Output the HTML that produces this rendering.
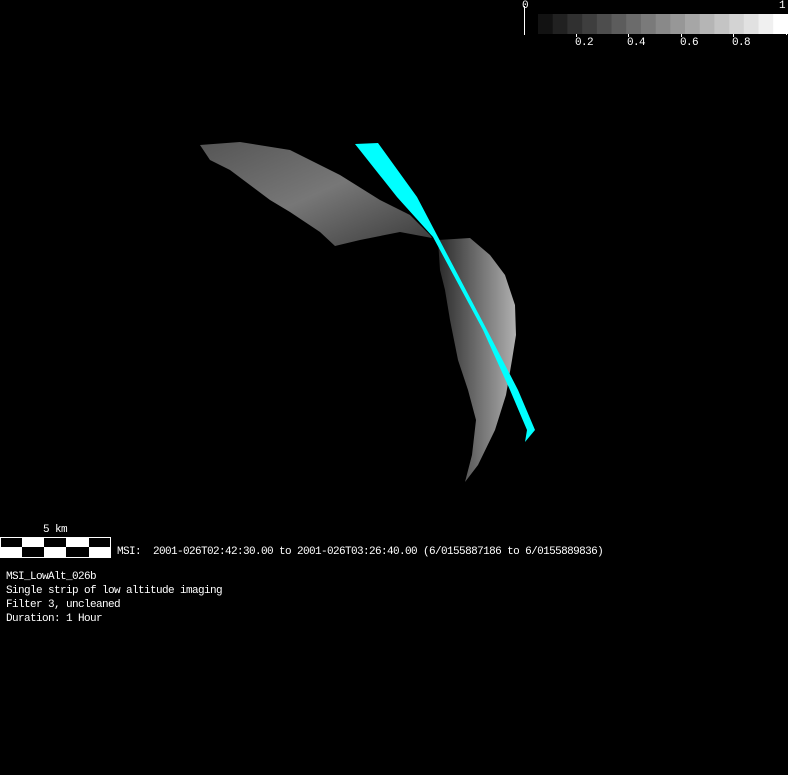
<!DOCTYPE html>
<html><head><style>
body{margin:0;background:#000;width:788px;height:775px;overflow:hidden;position:relative;font-family:"Liberation Mono",monospace;color:#fff;font-size:11px;letter-spacing:-0.6px}
.t{position:absolute;white-space:pre;line-height:12px}
</style></head><body>
<svg width="788" height="775" style="position:absolute;left:0;top:0">
<defs>
<linearGradient id="g1" x1="0" y1="0" x2="1" y2="1">
<stop offset="0" stop-color="#555"/><stop offset="0.5" stop-color="#777"/><stop offset="1" stop-color="#3a3a3a"/>
</linearGradient>
<linearGradient id="g2" x1="0" y1="0" x2="1" y2="0">
<stop offset="0" stop-color="#2a2a2a"/><stop offset="0.6" stop-color="#7a7a7a"/><stop offset="1" stop-color="#b0b0b0"/>
</linearGradient>
</defs>
<polygon fill="url(#g1)" points="200,145 240,142 290,150 340,175 380,200 410,215 430,235 432,238 400,232 360,240 335,246 320,232 290,212 270,200 230,170 210,160"/>
<polygon fill="url(#g2)" points="438,240 470,238 490,255 505,275 515,305 516,335 512,360 506,395 495,430 478,465 465,482 472,455 476,420 468,390 458,360 450,320 445,290 440,270"/>
<polygon fill="#00ffff" points="355,144 378,143 417,197 438,237 487,330 518,390 535,430 525,442 527,430 510,390 483,330 433,237 397,197"/>
<line x1="524.5" y1="6" x2="524.5" y2="35" stroke="#fff"/>
<line x1="786.5" y1="14" x2="786.5" y2="35" stroke="#fff"/>
<g id="cb"></g>
<line x1="576.5" y1="34" x2="576.5" y2="37" stroke="#fff"/>
<line x1="628.5" y1="34" x2="628.5" y2="37" stroke="#fff"/>
<line x1="681.5" y1="34" x2="681.5" y2="37" stroke="#fff"/>
<line x1="733.5" y1="34" x2="733.5" y2="37" stroke="#fff"/>
<rect x="0.5" y="537.5" width="110" height="20" fill="#fff" stroke="#fff"/>
<rect x="1" y="538" width="21" height="9" fill="#000"/>
<rect x="44" y="538" width="22" height="9" fill="#000"/>
<rect x="89" y="538" width="21" height="9" fill="#000"/>
<rect x="22" y="547" width="22" height="10" fill="#000"/>
<rect x="66" y="547" width="23" height="10" fill="#000"/>
</svg>
<div class="t" style="left:522px;top:0px">0</div>
<div class="t" style="left:779px;top:0px">1</div>
<div class="t" style="left:575px;top:37px">0.2</div>
<div class="t" style="left:627px;top:37px">0.4</div>
<div class="t" style="left:680px;top:37px">0.6</div>
<div class="t" style="left:732px;top:37px">0.8</div>
<div class="t" style="left:43px;top:524px">5 km</div>
<div class="t" style="left:117px;top:546px">MSI:  2001-026T02:42:30.00 to 2001-026T03:26:40.00 (6/0155887186 to 6/0155889836)</div>
<div class="t" style="left:6px;top:571px">MSI_LowAlt_026b</div>
<div class="t" style="left:6px;top:585px">Single strip of low altitude imaging</div>
<div class="t" style="left:6px;top:599px">Filter 3, uncleaned</div>
<div class="t" style="left:6px;top:613px">Duration: 1 Hour</div>
<script>
var g=document.getElementById('cb'),s='';
for(var i=0;i<17;i++){var v=Math.round(18+i*(237/16));var x=538+i*14.7;
s+='<rect x="'+x.toFixed(1)+'" y="14" width="15" height="20" fill="rgb('+v+','+v+','+v+')"/>';}
g.innerHTML=s;
</script>
</body></html>
